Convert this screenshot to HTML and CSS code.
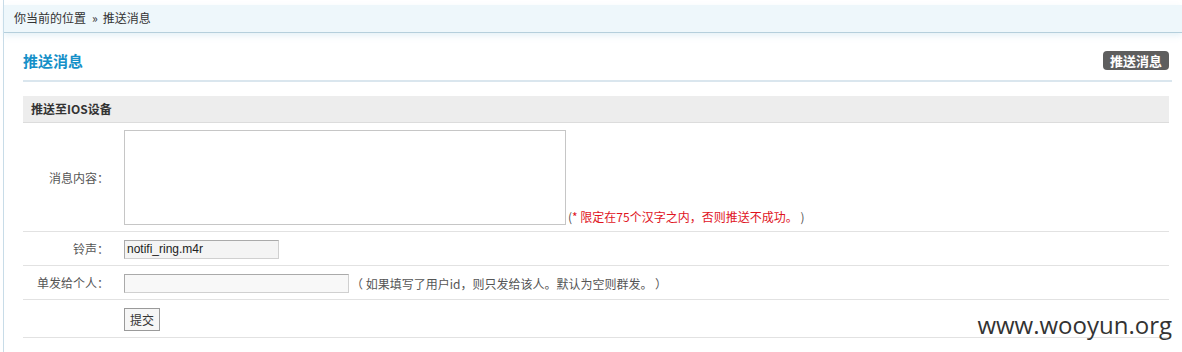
FILE: index.html
```html
<!DOCTYPE html>
<html lang="zh-CN">
<head>
    <meta charset="UTF-8">
    <title>推送消息</title>
    <link rel="stylesheet" href="styles.css">
</head>
<body>
    <div class="frame">
        <div class="crumbs">你当前的位置<span class="sep">&raquo;</span>推送消息</div>
        <div class="main">
            <div class="title-bar">
                <h2>推送消息</h2>
                <a href="#" class="tag-btn">推送消息</a>
            </div>
            <div class="box">
                <div class="box-head">推送至IOS设备</div>
                <form>
                    <table class="form-table">
                        <tr class="row-big">
                            <th>消息内容：</th>
                            <td><textarea name="content"></textarea><span class="note-red"><span class="paren">(</span>* 限定在75个汉字之内，否则推送不成功。<span class="paren"> )</span></span></td>
                        </tr>
                        <tr>
                            <th>铃声：</th>
                            <td><input type="text" class="inp-short" value="notifi_ring.m4r"></td>
                        </tr>
                        <tr>
                            <th>单发给个人：</th>
                            <td><input type="text" class="inp-long"><span class="note">（ 如果填写了用户id，则只发给该人。默认为空则群发。 ）</span></td>
                        </tr>
                        <tr class="row-btn">
                            <th></th>
                            <td><button type="submit" class="submit-btn">提交</button></td>
                        </tr>
                    </table>
                </form>
            </div>
        </div>
        <div class="mark">www.wooyun.org</div>
    </div>
</body>
</html>
```

FILE: styles.css
```css
body {
    margin: 0;
    font-family: "Noto Sans CJK SC", "Liberation Sans", sans-serif;
    font-size: 12px;
    color: #333;
    background: #fff;
}
.frame {
    position: relative;
    margin-left: 3px;
    padding-top: 5px;
    height: 347px;
    border-left: 1px solid #c8dce8;
}
.crumbs {
    height: 27px;
    line-height: 26px;
    padding-left: 10px;
    background: #eef7fb;
    border-bottom: 1px solid #b5cfdc;
    color: #333;
    box-shadow: 0 3px 6px rgba(200, 225, 238, 0.45);
}
.sep {
    margin: 0 5px 0 6px;
}
.main {
    padding: 12px 10px 0 19px;
}
.title-bar {
    display: flex;
    align-items: center;
    justify-content: space-between;
    height: 30px;
    padding-bottom: 5px;
    border-bottom: 2px solid #dae6ee;
    padding-right: 3px;
}
.title-bar h2 {
    margin: 0;
    font-size: 15px;
    font-weight: bold;
    color: #1590c8;
}
.tag-btn {
    display: inline-block;
    background: #5e5e5e;
    color: #fff;
    font-size: 13px;
    font-weight: bold;
    text-decoration: none;
    padding: 0 7px;
    height: 19px;
    line-height: 19px;
    border-radius: 4px;
}
.box {
    margin-top: 14px;
    margin-right: 3px;
}
.box-head {
    height: 26px;
    line-height: 26px;
    padding-left: 8px;
    background: #ededed;
    border-bottom: 1px solid #dcdcdc;
    font-weight: bold;
}
.form-table {
    width: 100%;
    border-collapse: collapse;
}
.form-table th {
    width: 85px;
    padding-right: 15px;
    text-align: right;
    font-weight: normal;
    color: #555;
    border-bottom: 1px solid #e2e2e2;
}
.form-table td {
    height: 33px;
    padding: 0;
    border-bottom: 1px solid #e2e2e2;
}
.row-big td {
    height: 107px;
    padding-top: 1px;
}
.row-btn td {
    height: 37px;
}
textarea {
    width: 442px;
    height: 95px;
    border: 1px solid #c6c6c6;
    margin: 0;
    padding: 0;
    resize: none;
    box-sizing: border-box;
    vertical-align: bottom;
}
input[type="text"] {
    height: 19px;
    border: 1px solid #aaa;
    border-right-color: #d0d0d0;
    border-bottom-color: #d0d0d0;
    padding: 0 2px;
    margin: 0;
    box-sizing: border-box;
    font-family: "Liberation Sans", sans-serif;
    font-size: 12px;
    color: #222;
    background: #f4f4f4;
    vertical-align: middle;
}
.inp-short {
    width: 155px;
}
.inp-long {
    width: 225px;
    background: #f8f8f8 !important;
}
.note-red {
    color: #e0141e;
    margin-left: 2px;
}
.paren {
    color: #555;
}
.note {
    color: #555;
    margin-left: 2px;
    vertical-align: middle;
}
.submit-btn {
    height: 23px;
    padding: 0 5px;
    font-family: "Noto Sans CJK SC", sans-serif;
    font-size: 12px;
    color: #333;
    background: #f6f6f6;
    border: 1px solid #9a9a9a;
    border-radius: 0;
    margin-top: 1px;
}
.mark {
    position: absolute;
    right: 10px;
    bottom: 11px;
    font-family: "Open Sans", sans-serif;
    font-size: 24px;
    color: #333;
}
```
